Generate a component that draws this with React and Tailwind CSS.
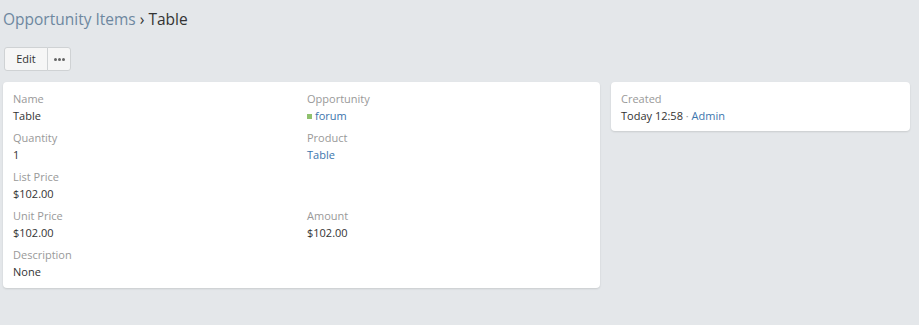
const Field = ({ label, children }) => (
  <div className="pb-[5px]">
    <div className="text-[11px] leading-[17px] text-[#999]">{label}</div>
    <div className="text-[11px] leading-[17px] text-[#333]">{children}</div>
  </div>
);

const Link = ({ children }) => <span className="text-[#3c75ad]">{children}</span>;

const App = () => {
  return (
    <div
      className="min-h-[325px] bg-[#e4e7ea] pl-[3px] pr-[9px]"
      style={{ fontFamily: '"Open Sans", sans-serif' }}
    >
      <div className="h-[38px] pt-[8px] text-[15.5px] leading-[22px]">
        <span className="text-[#6e87a0]">Opportunity Items</span>
        <span className="text-[#333]"> › Table</span>
      </div>

      <div className="flex h-[44px] items-start pl-[1px] pt-[9px]">
        <button className="h-[24px] w-[44px] rounded-l-[3px] border border-[#cfd2d4] bg-[#f6f6f6] text-[11px] text-[#333]">
          Edit
        </button>
        <button className="-ml-px flex h-[24px] w-[24px] items-center justify-center rounded-r-[3px] border border-[#cfd2d4] bg-[#f6f6f6]">
          <span className="flex gap-[1px]">
            <span className="h-[3px] w-[3px] rounded-full bg-[#666]" />
            <span className="h-[3px] w-[3px] rounded-full bg-[#666]" />
            <span className="h-[3px] w-[3px] rounded-full bg-[#666]" />
          </span>
        </button>
      </div>

      <div className="flex items-start gap-[11px]">
        <div className="w-[597px] rounded-[4px] bg-white px-[10px] pt-[8px] pb-[3px] shadow-[0_1px_2px_rgba(0,0,0,0.12)]">
          <div className="grid grid-cols-[294px_1fr]">
            <Field label="Name">Table</Field>
            <Field label="Opportunity">
              <span className="mr-[3px] inline-block h-[5px] w-[5px] bg-[#8fc16d] align-[1px]" />
              <Link>forum</Link>
            </Field>
            <Field label="Quantity">1</Field>
            <Field label="Product">
              <Link>Table</Link>
            </Field>
            <Field label="List Price">$102.00</Field>
            <div />
            <Field label="Unit Price">$102.00</Field>
            <Field label="Amount">$102.00</Field>
          </div>
          <Field label="Description">None</Field>
        </div>

        <div className="w-[299px] rounded-[4px] bg-white px-[10px] pt-[8px] pb-[2px] shadow-[0_1px_2px_rgba(0,0,0,0.12)]">
          <Field label="Created">
            Today 12:58 <span className="text-[#999]">·</span> <Link>Admin</Link>
          </Field>
        </div>
      </div>
    </div>
  );
};

export default App;
